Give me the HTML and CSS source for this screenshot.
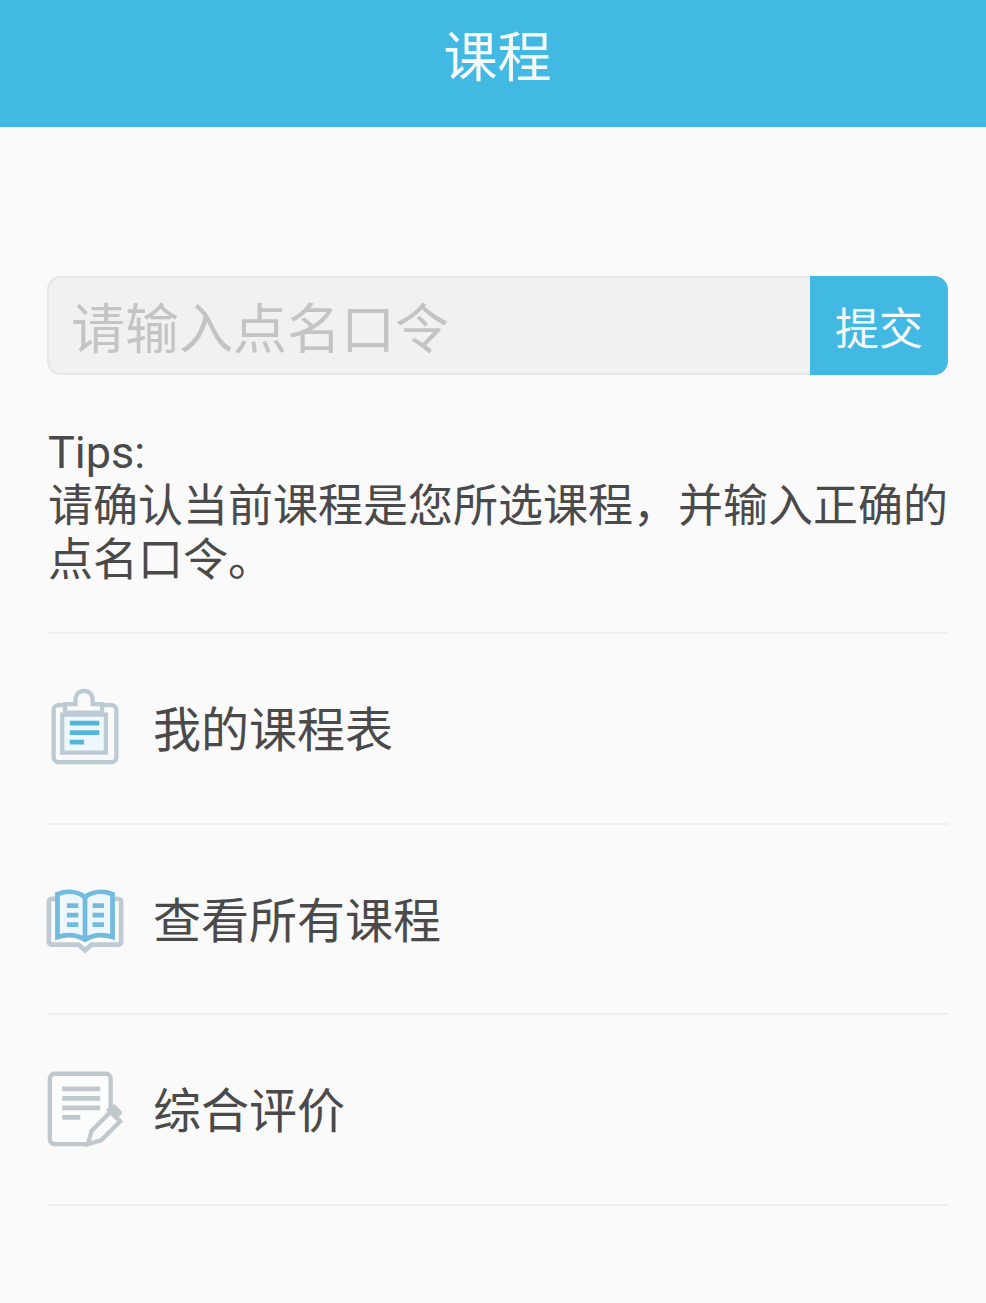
FILE: index.html
```html
<!DOCTYPE html>
<html lang="zh-CN">

<head>
    <meta charset="UTF-8">
    <meta name="viewport" content="width=device-width, initial-scale=1.0">
    <title>课程</title>
    <link rel="stylesheet" href="styles.css">
</head>

<body>
    <header class="topbar">课程</header>

    <main class="content">
        <form class="code-form">
            <input class="code-input" type="text" placeholder="请输入点名口令">
            <button class="code-submit" type="button">提交</button>
        </form>

        <p class="tips">Tips:<br>请确认当前课程是您所选课程，并输入正确的点名口令。</p>

        <ul class="menu">
            <li class="menu-item">
                <svg class="menu-icon" viewBox="0 0 80 80" fill="none">
                    <path d="M19 18H12a5 5 0 0 0-5 5v50a5 5 0 0 0 5 5h56a5 5 0 0 0 5-5V23a5 5 0 0 0-5-5h-10" stroke="#bccad3" stroke-width="4.5"/>
                    <rect x="16" y="28" width="46" height="40" fill="#eef7fb" stroke="#bccad3" stroke-width="4.5"/>
                    <path d="M19 26v-9h11v-5a9 9 0 0 1 18 0v5h10v9z" fill="#fafafa" stroke="#bccad3" stroke-width="4.5"/>
                    <path d="M24 37h31M24 47h31M24 57h15" stroke="#55b4da" stroke-width="5"/>
                </svg>
                <span>我的课程表</span>
            </li>
            <li class="menu-item">
                <svg class="menu-icon" viewBox="0 -3 80 80" fill="none">
                    <path d="M10 18H5a3 3 0 0 0-3 3v42a3 3 0 0 0 3 3h28l7 6 7-6h28a3 3 0 0 0 3-3V21a3 3 0 0 0-3-3h-5" stroke="#bfcad2" stroke-width="5"/>
                    <path d="M11 13c10-4 21-3 29 3 8-6 19-7 29-3v45c-10-3-21-2-29 3-8-5-19-6-29-3z" fill="#eef8fc" stroke="#72bade" stroke-width="5"/>
                    <path d="M40 16v45" stroke="#72bade" stroke-width="5"/>
                    <path d="M21 25h12M21 35h12M21 45h12M48 25h12M48 35h12M48 45h12" stroke="#72bade" stroke-width="5"/>
                </svg>
                <span>查看所有课程</span>
            </li>
            <li class="menu-item">
                <svg class="menu-icon" viewBox="0 -2 80 80" fill="none">
                    <path d="M44 77H8a5 5 0 0 1-5-5V8a5 5 0 0 1 5-5h54a5 5 0 0 1 5 5v36" fill="#fbfcfc" stroke="#bfc8cc" stroke-width="4.5"/>
                    <path d="M16 19h40M16 29h40M16 39h40M16 49h19" stroke="#bfc8cc" stroke-width="5"/>
                    <path d="M43 77l4-14 20-20 10 10-20 20z" fill="#fafafa" stroke="#bfc8cc" stroke-width="4.5"/>
                    <path d="M62 41l6-5a3 3 0 0 1 4 0l6 6a3 3 0 0 1 0 4l-6 6z" fill="#bfc8cc"/>
                </svg>
                <span>综合评价</span>
            </li>
        </ul>
    </main>
</body>

</html>
```

FILE: styles.css
```css
* {
    box-sizing: border-box;
}

html,
body {
    margin: 0;
    height: 100%;
    background: #fafafa;
    overflow: hidden;
}

body {
    font-family: "Roboto", "Noto Sans CJK SC", sans-serif;
    color: #4a4a4a;
}

.topbar {
    height: 127px;
    padding: 29px 0 0 9px;
    background: #41b9e3;
    color: #f4f9fb;
    font-size: 54px;
    line-height: 60px;
    text-align: center;
}

.content {
    padding: 149px 38px 0 47px;
}

.code-form {
    display: flex;
    height: 99px;
}

.code-input {
    flex: 1;
    min-width: 0;
    padding: 9px 0 0 22px;
    background: #f1f1f1;
    border: 2px solid #e7e7e7;
    border-right: 0;
    border-radius: 14px 0 0 14px;
    outline: none;
    font-family: inherit;
    font-size: 54px;
}

.code-input::placeholder {
    color: #c4c4c4;
    opacity: 1;
}

.code-submit {
    width: 138px;
    padding: 0;
    background: #41b9e3;
    border: 0;
    border-radius: 0 14px 14px 0;
    color: #f4f9fb;
    font-family: inherit;
    font-size: 44px;
}

.tips {
    margin: 51px 0 0;
    padding-left: 1px;
    font-size: 45px;
    line-height: 54px;
}

.menu {
    margin: 44px 0 0;
    padding: 0;
    list-style: none;
    border-top: 2px solid #eeeeee;
}

.menu-item {
    display: flex;
    align-items: center;
    gap: 30px;
    height: 190.5px;
    padding-bottom: 4px;
    border-bottom: 2px solid #eeeeee;
    font-size: 48px;
}

.menu-icon {
    width: 76px;
    height: 76px;
    flex: none;
    overflow: visible;
    filter: blur(0.7px);
}
```
